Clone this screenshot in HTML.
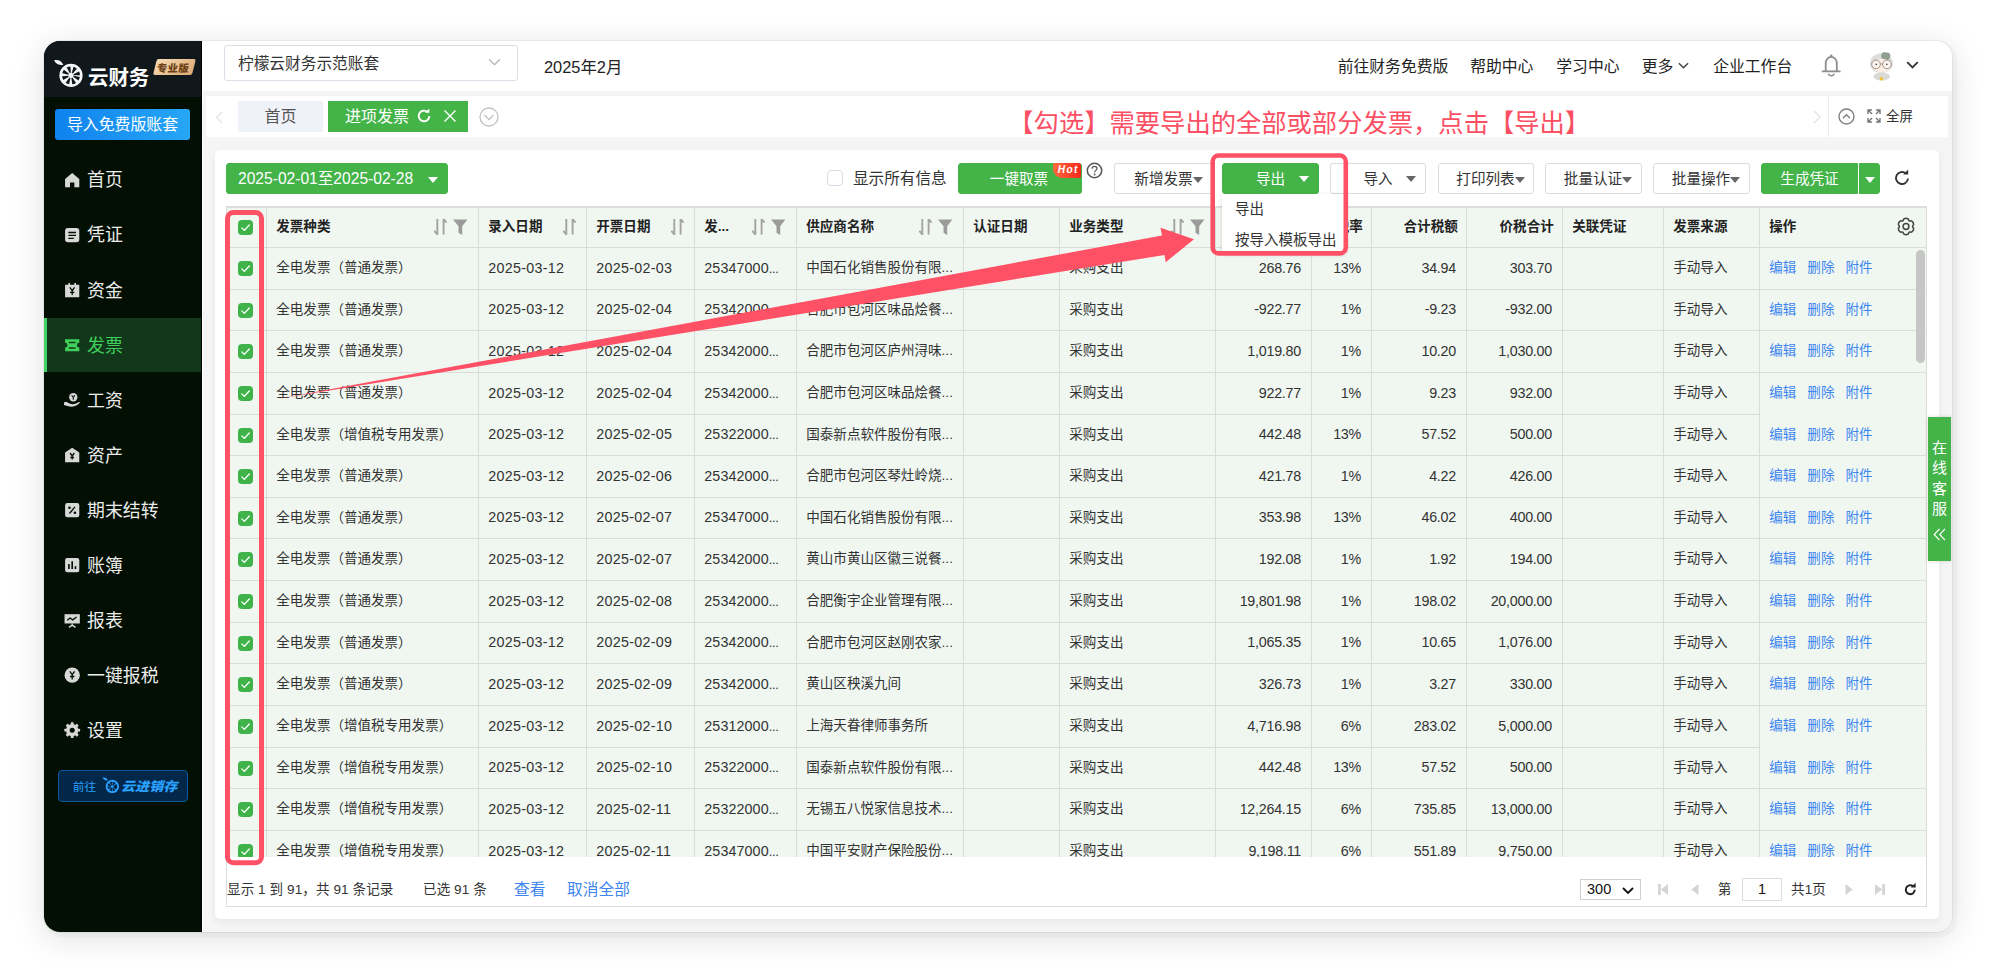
<!DOCTYPE html>
<html lang="zh-CN">
<head>
<meta charset="utf-8">
<title>进项发票 - 柠檬云财务</title>
<style>
*{box-sizing:border-box;margin:0;padding:0}
html,body{width:1996px;height:976px;overflow:hidden;background:#fff}
body{font-family:"Liberation Sans","Noto Sans CJK SC",sans-serif;color:#333;position:relative;font-size:13.54px;line-height:1.2}
a{text-decoration:none;color:inherit}
ul{list-style:none}
.abs{position:absolute}
/* app card */
.shadow{position:absolute;left:44px;top:41px;width:1908px;height:891px;border-radius:16px;box-shadow:0 6px 34px rgba(0,0,0,.13),0 0 0 1px rgba(0,0,0,.05),2.700px 2.700px 0 2.700px rgba(0,0,0,.022)}
.app{position:absolute;left:44px;top:41px;width:1908px;height:891px;border-radius:16px;background:#f5f5f5;overflow:hidden}
.page{position:absolute;left:-44px;top:-41px;width:1996px;height:976px}
/* sidebar */
.side{position:absolute;left:44px;top:41px;width:158px;border-right:1px solid #000;height:891px;background:#020f02}
.logo{position:absolute;left:0;top:0;width:157px;height:56px;background:#10181b}
.logo .brand{position:absolute;left:44px;top:21.500px;color:#fff;font-size:20.500px;font-weight:700;letter-spacing:-.1px;line-height:30px}
.logo .lemon{position:absolute;left:9px;top:18px}
.logo .pro{position:absolute;left:111px;top:17.700px;width:39px;height:15.500px;background:linear-gradient(135deg,#f7dcb6,#dba772);transform:skewX(-14deg);border-radius:2px}
.logo .pro span{display:block;position:relative;top:.800px;transform:skewX(8deg);color:#6b3f14;font-size:10.300px;font-weight:900;line-height:18.200px;text-align:center;letter-spacing:.500px;padding-right:2px}
.imp{position:absolute;left:11px;top:68px;width:135px;height:31px;border-radius:3px;background:linear-gradient(90deg,#0f82ee,#27a6f6);color:#fff;font-size:15.900px;line-height:31px;text-align:center}
.menu{position:absolute;left:0;top:111.400px;width:157px}
.menu li{position:relative;height:54.200px;margin-bottom:.900px;color:#ececec;font-size:17.900px;line-height:57px;padding-left:43px}
.menu li svg{position:absolute;left:20.300px;top:19.300px;width:16.400px;height:16.400px}
.menu li.on{background:#12381c;color:#3fcf5a}
.menu li.on:before{content:"";position:absolute;left:0;top:0;width:3px;height:100%;background:#3fd267}
.jxc{position:absolute;left:14.300px;top:729px;width:129.600px;height:31.700px;border:1px solid #0a5a9c;border-radius:4px;background:#022749;color:#2aa0ff;font-size:11.700px;line-height:32px;padding-left:13.500px;white-space:nowrap}
.jxc b{position:absolute;left:62px;top:0;font-style:italic;font-weight:900;font-size:12.800px;letter-spacing:0;display:inline-block;transform:scaleX(1.100);transform-origin:0 50%}
.jxc svg{position:absolute;left:42.500px;top:5.800px}
/* top header */
.top{position:absolute;left:202px;top:41px;width:1750px;height:50px;background:#fff}
.acct{position:absolute;left:22px;top:4px;width:294px;height:36px;border:1px solid #dcdfe8;border-radius:3px;font-size:15.700px;line-height:36.600px;padding-left:13px;color:#333}
.acct svg{position:absolute;right:16px;top:12px}
.period{position:absolute;left:342px;top:14px;font-size:16.400px;line-height:24px;color:#222}
.nav{position:absolute;top:14px;font-size:15.800px;line-height:24px;color:#222;white-space:nowrap}
/* tab bar */
.tabs{position:absolute;left:206px;top:96px;width:1742px;height:41px;background:#fff}
.tab{position:absolute;top:5px;height:31px;line-height:31px;font-size:16px;text-align:center}
.tab.home{left:32px;width:85px;background:#f0f2f9;color:#555}
.tab.cur{left:122px;width:140px;background:#44b449;color:#fff;text-align:left;padding-left:17px}
.tab.cur svg{position:absolute;top:7px}
.tabs .sep{position:absolute;left:1622px;top:0;width:1px;height:41px;background:#eee}
.full{position:absolute;left:1680px;top:12px;font-size:13.5px;line-height:18px;color:#333}
/* main panel */
.main{position:absolute;left:215px;top:150px;width:1724px;height:769px;background:#fff;border-radius:5px;box-shadow:0 3px 7px rgba(40,50,70,.07)}
.btn{position:absolute;top:163px;height:31px;border:1px solid #dcdcdc;border-radius:3px;background:#fff;font-size:14.600px;line-height:30.400px;color:#333;text-align:center;white-space:nowrap}
.btn.g{background:#44b449;border-color:#44b449;color:#fff}
.caret{display:inline-block;width:0;height:0;border-left:5px solid transparent;border-right:5px solid transparent;border-top:6px solid #666;vertical-align:middle}
.btn.g .caret{border-top-color:#fff}
.showall{position:absolute;left:827px;top:171.300px;font-size:15.600px;line-height:16px;color:#333;padding-left:26px;white-space:nowrap}
.showall i{position:absolute;left:0;top:-1.300px;width:16px;height:16px;border:1px solid #d9dce6;border-radius:4px;background:#fff}
.hot{position:absolute;left:1052.700px;top:163px;width:28.500px;height:14.700px;background:linear-gradient(90deg,#ff6a3d,#f5271c);border-radius:2px 3px 2px 9px;color:#fff;font-size:10.200px;font-weight:700;font-style:italic;line-height:14.400px;text-align:center;letter-spacing:1.300px;padding-left:2.500px}
.dd{position:absolute;left:1222px;top:194px;width:124px;height:60px;background:#fff;box-shadow:0 1px 4px rgba(0,0,0,.14);padding-top:1.300px}
.dd div{height:31px;line-height:29px;font-size:14.500px;padding-left:13px;color:#333;white-space:nowrap}
/* grid */
.grid{position:absolute;left:226px;top:206px;width:1701px;height:651px;overflow:hidden;border-top:2px solid #ddd;background:#f0f7f1}
.tbl{border-collapse:separate;border-spacing:0;table-layout:fixed;width:1701px}
.tbl th,.tbl td{border-right:1px solid #dadcda;border-bottom:1px solid #dadcda;padding:0 0 0 9.300px;font-size:13.540px;white-space:nowrap;overflow:hidden;text-align:left;color:#333;position:relative;vertical-align:middle}
.tbl th{height:40px;font-weight:700;color:#222;background:#f0f7f1}
.tbl td{height:42px;background:#f0f7f1}
.tbl tr.s td{height:41px}
.tbl th:first-child,.tbl td:first-child{border-left:1px solid #dadcda}
.tbl .c{padding:0 2px 0 0;text-align:center}
.tbl .r{text-align:right;padding:0 10px 0 0}
.tbl th.r{padding-right:8.300px}
.tbl .n{letter-spacing:-.250px;font-size:14.300px}
.tbl .d{letter-spacing:.280px;font-size:14.300px}
.tbl .v{letter-spacing:.100px;font-size:14.300px}
.tbl .v i{font-style:normal;letter-spacing:-.300px;font-size:13px}
.ck{display:inline-block;width:15px;height:15px;border-radius:4px;background:#3fb34a;vertical-align:middle}
.ck svg{display:block}
.hi{position:absolute;right:10.500px;top:11px;white-space:nowrap;line-height:0}
.hi svg{margin-left:5.500px;vertical-align:top}
.gear{position:absolute;right:11px;top:9px}
.op a{color:#3d86f0;margin-right:11px}
.tbl td.op.nb{border-bottom-color:transparent}
.vbar{position:absolute;left:1690px;top:42px;width:9px;height:113px;border-radius:5px;background:#c6c6c6}
/* footer */
.foot{position:absolute;left:226px;top:857px;width:1701px;height:50px;border:1px solid #ddd;border-top:none;background:#fff;font-size:13.54px;color:#333}
.foot span,.foot a{position:absolute;top:23.500px;letter-spacing:.100px;line-height:18px;white-space:nowrap}
.foot a{color:#3d86f0;font-size:15.700px}
/* service */
.svc{position:absolute;left:1928px;top:417px;width:23px;height:144px;background:#44b449;color:#fff;font-size:15px;line-height:20.3px;text-align:center;padding-top:21px;box-shadow:0 0 4px rgba(0,0,0,.15)}
/* annotations */
.anno{position:absolute;left:0;top:0;width:1996px;height:976px;pointer-events:none}
.tip{position:absolute;left:1008.300px;top:106px;font-size:25.300px;line-height:34px;color:#fc4f63;white-space:nowrap;letter-spacing:0}
.psel{position:absolute;left:1353px;top:22px;width:61px;height:21px;border:1px solid #cfcfcf;border-radius:0;font-size:14.5px;line-height:19px;padding-left:6px;color:#111;background:#fff}
.psel svg{position:absolute;right:6px;top:7px}
.pinp{position:absolute;left:1515px;top:21px;width:40px;height:23px;border:1px solid #ddd;border-radius:0;font-size:14.500px;line-height:21px;text-align:center;color:#111;background:#fff}

.btn .cr{position:absolute;right:9px;top:12px;width:0;height:0;border-left:5px solid transparent;border-right:5px solid transparent;border-top:6px solid #666}
.btn.g .cr{border-top-color:#fff}
.btn.pl{padding-left:9px}
.edge{position:absolute;left:202px;top:91px;width:1.300px;height:841px;background:#fff}

</style>
</head>
<body>
<div class="shadow"></div>
<div class="app"><div class="page">

<!-- sidebar -->
<aside class="side">
  <div class="logo">
    <svg class="lemon" viewBox="0 0 32 30" width="32" height="30"><path d="M1 1.200c4.500-.900 8 1 9.300 4.800C6.500 6.600 3 5 1 1.200z" fill="#f4f6f8"/><circle cx="18" cy="16.400" r="11.600" fill="#f4f6f8"/><circle cx="18" cy="16.400" r="5.800" fill="none" stroke="#10181b" stroke-width="6.400" stroke-dasharray="2.455 2.100" transform="rotate(10 18 16.400)"/></svg>
    <span class="brand">云财务</span>
    <span class="pro"><span>专业版</span></span>
  </div>
  <a class="imp">导入免费版账套</a>
  <ul class="menu">
    <li><svg viewBox="0 0 15 15" width="15" height="15"><path d="M7.500 1L1 6.500V14h4.500V9.500h4V14H14V6.500z" fill="#d8d8d8"/></svg>首页</li>
    <li><svg viewBox="0 0 15 15" width="15" height="15"><rect x="1" y="1" width="13" height="13" rx="2.500" fill="#d8d8d8"/><path d="M4 5h7M4 7.700h7M4 10.400h5" stroke="#020f02" stroke-width="1.300"/></svg>凭证</li>
    <li><svg viewBox="0 0 15 15" width="15" height="15"><path d="M1 2.500h3V1h1.500v1.500h4V1H11v1.500h3V14H1z" fill="#d8d8d8"/><path d="M5.300 5l2.200 3 2.200-3M7.500 8v4M5.500 9.500h4" stroke="#020f02" stroke-width="1.200" fill="none"/></svg>资金</li>
    <li class="on"><svg viewBox="0 0 15 15" width="15" height="15"><path d="M1 2h13v3.300a2.200 2.200 0 0 0 0 4.400V13H1V9.700a2.200 2.200 0 0 0 0-4.400z" fill="#3fcf5a"/><path d="M4.500 5h6M4.500 10h6" stroke="#12381c" stroke-width="1.400"/></svg>发票</li>
    <li><svg viewBox="0 0 15 15" width="15" height="15"><circle cx="8.500" cy="4.800" r="3.800" fill="#d8d8d8"/><path d="M7 3l1.500 2L10 3M8.500 5v2" stroke="#020f02" stroke-width="1" fill="none"/><path d="M0 9.500c2-.8 3.500 0 5 1 2 1 4 1 6.500-.2 1.200-.6 2.500-1.300 3.500-1.300-1.500 2.500-4.500 4.500-8 4.500-2.500 0-5-1-7-1.500z" fill="#d8d8d8"/></svg>工资</li>
    <li><svg viewBox="0 0 15 15" width="15" height="15"><path d="M7.500 .8L14 5v9H1V5z" fill="#d8d8d8"/><path d="M5.500 5.500l2 2.700 2-2.700M7.500 8v3.500M5.800 9.600h3.400" stroke="#020f02" stroke-width="1.200" fill="none"/></svg>资产</li>
    <li><svg viewBox="0 0 15 15" width="15" height="15"><rect x="1" y="1" width="13" height="13" rx="2" fill="#d8d8d8"/><path d="M10 4.500l-5 6" stroke="#020f02" stroke-width="1.200"/><circle cx="5" cy="5.300" r="1.200" fill="#020f02"/><circle cx="10" cy="9.800" r="1.200" fill="#020f02"/></svg>期末结转</li>
    <li><svg viewBox="0 0 15 15" width="15" height="15"><rect x="1" y="1" width="13" height="13" rx="2" fill="#d8d8d8"/><path d="M4.500 11V6.500M7.500 11V4M10.500 11V8.500" stroke="#020f02" stroke-width="1.500"/></svg>账簿</li>
    <li><svg viewBox="0 0 15 15" width="15" height="15"><path d="M.5 2h14v8.500H.5z" fill="#d8d8d8"/><path d="M3 7.500l2.500-2 2.500 1.700L11.500 4.500" stroke="#020f02" stroke-width="1.200" fill="none"/><path d="M7.500 10.500v1.500M4.500 14l3-2 3 2" stroke="#d8d8d8" stroke-width="1.300" fill="none"/></svg>报表</li>
    <li><svg viewBox="0 0 15 15" width="15" height="15"><circle cx="7.500" cy="7.500" r="7" fill="#d8d8d8"/><path d="M5.300 4l2.200 3 2.200-3M7.500 7v4.500M5.500 8.700h4" stroke="#020f02" stroke-width="1.200" fill="none"/></svg>一键报税</li>
    <li><svg viewBox="0 0 15 15" width="15" height="15"><g fill="#d8d8d8"><circle cx="7.500" cy="7.500" r="5.600"/><rect x="6.200" y=".300" width="2.600" height="3" rx=".500" transform="rotate(0 7.500 7.500)"/><rect x="6.200" y=".300" width="2.600" height="3" rx=".500" transform="rotate(45 7.500 7.500)"/><rect x="6.200" y=".300" width="2.600" height="3" rx=".500" transform="rotate(90 7.500 7.500)"/><rect x="6.200" y=".300" width="2.600" height="3" rx=".500" transform="rotate(135 7.500 7.500)"/><rect x="6.200" y=".300" width="2.600" height="3" rx=".500" transform="rotate(180 7.500 7.500)"/><rect x="6.200" y=".300" width="2.600" height="3" rx=".500" transform="rotate(225 7.500 7.500)"/><rect x="6.200" y=".300" width="2.600" height="3" rx=".500" transform="rotate(270 7.500 7.500)"/><rect x="6.200" y=".300" width="2.600" height="3" rx=".500" transform="rotate(315 7.500 7.500)"/></g><circle cx="7.500" cy="7.500" r="2.300" fill="#020f02"/></svg>设置</li>
  </ul>
  <a class="jxc">前往<svg viewBox="0 0 32 30" width="18.400" height="17.250"><path d="M1 1.200c4.500-.900 8 1 9.300 4.800C6.500 6.600 3 5 1 1.200z" fill="#2aa0ff"/><circle cx="18" cy="16.400" r="11.600" fill="#2aa0ff"/><circle cx="18" cy="16.400" r="5.300" fill="none" stroke="#022749" stroke-width="6.200" stroke-dasharray="3.060 1.102" transform="rotate(5 18 16.400)"/></svg><b>云进销存</b></a>
</aside>

<i class="edge"></i>
<!-- top header -->
<header class="top">
  <div class="acct">柠檬云财务示范账套<svg viewBox="0 0 14 10" width="13" height="9"><path d="M1 1.500l6 6 6-6" fill="none" stroke="#aaa" stroke-width="1.200"/></svg></div>
  <span class="period">2025年2月</span>
  <a class="nav" style="left:1135.700px">前往财务免费版</a>
  <a class="nav" style="left:1268.200px">帮助中心</a>
  <a class="nav" style="left:1354.300px">学习中心</a>
  <a class="nav" style="left:1439.700px">更多<svg viewBox="0 0 12 8" width="11" height="8" style="margin-left:5px;vertical-align:2px"><path d="M1 1l5 5 5-5" fill="none" stroke="#444" stroke-width="1.600"/></svg></a>
  <a class="nav" style="left:1511.200px">企业工作台</a>
  <svg class="abs" style="left:1618.800px;top:13.300px" viewBox="0 0 20 24" width="20" height="24"><circle cx="10.200" cy="1.700" r="1.200" fill="#8c8c8c"/><path d="M4.700 17.400V9.200a5.550 6.300 0 0 1 11.100 0V17.400" fill="none" stroke="#8c8c8c" stroke-width="1.800"/><path d="M.800 17.400H19.600" stroke="#8c8c8c" stroke-width="1.700"/><path d="M7.400 19.600a2.900 2.600 0 0 0 5.700 0" fill="none" stroke="#8c8c8c" stroke-width="1.500"/></svg>
  <svg class="abs" style="left:1667.900px;top:10.700px" viewBox="0 0 24 29" width="24" height="29"><ellipse cx="11.700" cy="24.500" rx="8.300" ry="4" fill="#d9d9d7"/><ellipse cx="11.500" cy="11.300" rx="11.500" ry="10" fill="#dededc"/><rect x="11.300" y=".300" width="8.800" height="7" rx="2.500" fill="#8e9e91" transform="rotate(8 15 4)"/><ellipse cx="11.800" cy="13.600" rx="9.500" ry="6.700" fill="#fdeee6"/><circle cx="3.700" cy="15" r="1.300" fill="#f9cfd0"/><circle cx="19.800" cy="15" r="1.300" fill="#f9cfd0"/><circle cx="6" cy="12.400" r="4.300" fill="rgba(255,255,255,.55)" stroke="#97857b" stroke-width=".900"/><circle cx="17" cy="12.400" r="4.300" fill="rgba(255,255,255,.55)" stroke="#97857b" stroke-width=".900"/><path d="M10.300 12h2.400" stroke="#97857b" stroke-width=".900"/><circle cx="6.300" cy="12.300" r=".850" fill="#4a4a4a"/><circle cx="16.800" cy="12.300" r=".850" fill="#4a4a4a"/><circle cx="11.400" cy="26.700" r="1.700" fill="#f2c230"/></svg>
  <svg class="abs" style="left:1704px;top:19.800px" viewBox="0 0 13 9" width="13" height="9"><path d="M1.200 1.200l5.300 5.300 5.300-5.300" fill="none" stroke="#333" stroke-width="1.800"/></svg>
</header>

<!-- tab bar -->
<nav class="tabs">
  <svg class="abs" style="left:8.500px;top:14.500px" viewBox="0 0 8 13" width="8" height="13"><path d="M7 1L1.500 6.500 7 12" fill="none" stroke="#e4e4e4" stroke-width="1.400"/></svg>
  <a class="tab home">首页</a>
  <a class="tab cur">进项发票
    <svg style="left:88px" viewBox="0 0 16 16" width="16" height="16"><path d="M13.300 8A5.300 5.300 0 1 1 11.500 4" fill="none" stroke="#fff" stroke-width="1.900"/><path d="M9 4.800h4.300V.6z" fill="#fff"/></svg>
    <svg style="left:114px" viewBox="0 0 16 16" width="16" height="16"><path d="M2.500 2.500l11 11M13.500 2.500l-11 11" stroke="#fff" stroke-width="1.400"/></svg>
  </a>
  <svg class="abs" style="left:272.500px;top:10.500px" viewBox="0 0 20 20" width="20" height="20"><circle cx="10" cy="10" r="9" fill="none" stroke="#c2c2c2" stroke-width="1.300"/><path d="M5.500 8l4.500 4.500L14.500 8" fill="none" stroke="#c2c2c2" stroke-width="1.300"/></svg>
  <svg class="abs" style="left:1607.300px;top:13.500px" viewBox="0 0 8 14" width="8" height="14"><path d="M1 1l6 6-6 6" fill="none" stroke="#e2e2e2" stroke-width="1.300"/></svg>
  <i class="sep"></i>
  <svg class="abs" style="left:1632px;top:11.700px" viewBox="0 0 17 17" width="17" height="17"><circle cx="8.500" cy="8.500" r="7.500" fill="none" stroke="#808080" stroke-width="1.400"/><path d="M5 10.200l3.500-3.500 3.500 3.500" fill="none" stroke="#808080" stroke-width="1.400"/></svg>
  <svg class="abs" style="left:1661px;top:13.300px" viewBox="0 0 14 14" width="14" height="14"><path d="M1 5V1h4M9 1h4v4M13 9v4H9M5 13H1V9M1.500 1.500l3.500 3.500M12.500 1.500L9 5M12.500 12.500L9 9M1.500 12.500L5 9" fill="none" stroke="#777" stroke-width="1.400"/></svg>
  <span class="full">全屏</span>
</nav>

<!-- main -->
<section class="main"></section>
<a class="btn g" style="left:226px;width:222px;text-align:left;padding-left:11px;font-size:15.6px">2025-02-01至2025-02-28<i class="caret" style="margin-left:15px;border-top-color:#fff"></i></a>
<label class="showall"><i></i>显示所有信息</label>
<a class="btn g" style="left:958px;width:124px;padding-right:2px">一键取票</a>
<span class="hot">Hot</span>
<svg class="abs" style="left:1086px;top:161.600px" viewBox="0 0 17 17" width="17" height="17"><circle cx="8.500" cy="8.500" r="7.200" fill="none" stroke="#555" stroke-width="1.500"/><path d="M6 6.800c0-1.500 1.100-2.500 2.500-2.500s2.500 1 2.500 2.300c0 1.700-2.400 1.900-2.400 3.800" fill="none" stroke="#555" stroke-width="1.200"/><circle cx="8.600" cy="12.500" r=".9" fill="#555"/></svg>
<a class="btn pl" style="left:1114px;width:100px">新增发票<i class="caret"></i></a>
<a class="btn g" style="left:1222px;width:97px">导出<i class="cr"></i></a>
<a class="btn" style="left:1330px;width:96px">导入<i class="cr"></i></a>
<a class="btn pl" style="left:1438px;width:96px">打印列表<i class="caret"></i></a>
<a class="btn pl" style="left:1545px;width:97px">批量认证<i class="caret"></i></a>
<a class="btn pl" style="left:1653px;width:97px">批量操作<i class="caret"></i></a>
<a class="btn g" style="left:1761px;width:97px;border-radius:3px 0 0 3px">生成凭证</a>
<a class="btn g" style="left:1859px;width:21px;border-radius:0 3px 3px 0"><i class="caret"></i></a>
<svg class="abs" style="left:1893px;top:169px" viewBox="0 0 18 18" width="18" height="18"><path d="M15 9.500A6 6 0 1 1 12.800 4.300" fill="none" stroke="#333" stroke-width="1.900"/><path d="M10.200 5.600h5V.6z" fill="#333"/></svg>
<div class="grid">
<table class="tbl">
<colgroup>
<col style="width:41px">
<col style="width:212px">
<col style="width:108px">
<col style="width:108px">
<col style="width:102px">
<col style="width:167px">
<col style="width:96px">
<col style="width:156px">
<col style="width:96px">
<col style="width:60px">
<col style="width:95px">
<col style="width:96px">
<col style="width:101px">
<col style="width:96px">
<col style="width:167px">
</colgroup>
<thead>
<tr>
<th class="c"><span class="ck"><svg viewBox="0 0 15 15" width="15" height="15"><path d="M3.800 7.900l2.500 2.500L11.300 5" fill="none" stroke="#fff" stroke-width="1.300" stroke-linecap="round" stroke-linejoin="round"/></svg></span></th>
<th class=""><span class="hl">发票种类</span><span class="hi"><svg class="sort" viewBox="0 0 13 16" width="13" height="16"><path d="M3.300 0v15.400L.300 11.800M9.600 15.400V0l2.900 3.600" fill="none" stroke="#a3a3a3" stroke-width="1.900"/></svg><svg class="filt" viewBox="0 0 15 16" width="15" height="16"><path d="M0 .400h14.400L9.200 7.200v8.800L5.500 13.700V7.200z" fill="#9b9b9b"/></svg></span></th>
<th class=""><span class="hl">录入日期</span><span class="hi"><svg class="sort" viewBox="0 0 13 16" width="13" height="16"><path d="M3.300 0v15.400L.300 11.800M9.600 15.400V0l2.900 3.600" fill="none" stroke="#a3a3a3" stroke-width="1.900"/></svg></span></th>
<th class=""><span class="hl">开票日期</span><span class="hi"><svg class="sort" viewBox="0 0 13 16" width="13" height="16"><path d="M3.300 0v15.400L.300 11.800M9.600 15.400V0l2.900 3.600" fill="none" stroke="#a3a3a3" stroke-width="1.900"/></svg></span></th>
<th class=""><span class="hl">发...</span><span class="hi"><svg class="sort" viewBox="0 0 13 16" width="13" height="16"><path d="M3.300 0v15.400L.300 11.800M9.600 15.400V0l2.900 3.600" fill="none" stroke="#a3a3a3" stroke-width="1.900"/></svg><svg class="filt" viewBox="0 0 15 16" width="15" height="16"><path d="M0 .400h14.400L9.200 7.200v8.800L5.500 13.700V7.200z" fill="#9b9b9b"/></svg></span></th>
<th class=""><span class="hl">供应商名称</span><span class="hi"><svg class="sort" viewBox="0 0 13 16" width="13" height="16"><path d="M3.300 0v15.400L.300 11.800M9.600 15.400V0l2.900 3.600" fill="none" stroke="#a3a3a3" stroke-width="1.900"/></svg><svg class="filt" viewBox="0 0 15 16" width="15" height="16"><path d="M0 .400h14.400L9.200 7.200v8.800L5.500 13.700V7.200z" fill="#9b9b9b"/></svg></span></th>
<th class=""><span class="hl">认证日期</span></th>
<th class=""><span class="hl">业务类型</span><span class="hi"><svg class="sort" viewBox="0 0 13 16" width="13" height="16"><path d="M3.300 0v15.400L.300 11.800M9.600 15.400V0l2.900 3.600" fill="none" stroke="#a3a3a3" stroke-width="1.900"/></svg><svg class="filt" viewBox="0 0 15 16" width="15" height="16"><path d="M0 .400h14.400L9.200 7.200v8.800L5.500 13.700V7.200z" fill="#9b9b9b"/></svg></span></th>
<th class="r"><span class="hl">金额</span></th>
<th class="r"><span class="hl">税率</span></th>
<th class="r"><span class="hl">合计税额</span></th>
<th class="r"><span class="hl">价税合计</span></th>
<th class=""><span class="hl">关联凭证</span></th>
<th class=""><span class="hl">发票来源</span></th>
<th><span class="hl">操作</span><svg class="gear" viewBox="0 0 18 19" width="18" height="19"><path d="M10.80 1.71C9.96 1.34 8.04 1.34 7.20 1.71C6.36 2.07 6.43 3.48 5.75 3.87C5.07 4.26 3.88 3.50 3.15 4.04C2.42 4.59 1.46 6.25 1.35 7.16C1.24 8.07 2.50 8.72 2.50 9.50C2.50 10.28 1.24 10.93 1.35 11.84C1.46 12.75 2.42 14.41 3.15 14.96C3.88 15.50 5.07 14.74 5.75 15.13C6.43 15.52 6.36 16.93 7.20 17.29C8.04 17.66 9.96 17.66 10.80 17.29C11.64 16.93 11.57 15.52 12.25 15.13C12.93 14.74 14.12 15.50 14.85 14.96C15.58 14.41 16.54 12.75 16.65 11.84C16.76 10.93 15.50 10.28 15.50 9.50C15.50 8.72 16.76 8.07 16.65 7.16C16.54 6.25 15.58 4.59 14.85 4.04C14.12 3.50 12.93 4.26 12.25 3.87C11.57 3.48 11.64 2.07 10.80 1.71z" fill="none" stroke="#444" stroke-width="1.500" stroke-linejoin="round"/><circle cx="9" cy="9.500" r="2.900" fill="none" stroke="#444" stroke-width="1.500"/></svg></th>
</tr>
</thead>
<tbody>
<tr><td class="c"><span class="ck"><svg viewBox="0 0 15 15" width="15" height="15"><path d="M3.800 7.900l2.500 2.500L11.300 5" fill="none" stroke="#fff" stroke-width="1.300" stroke-linecap="round" stroke-linejoin="round"/></svg></span></td><td>全电发票（普通发票）</td><td class="d">2025-03-12</td><td class="d">2025-02-03</td><td class="v">25347000<i>...</i></td><td>中国石化销售股份有限...</td><td></td><td>采购支出</td><td class="r n">268.76</td><td class="r n">13%</td><td class="r n">34.94</td><td class="r n">303.70</td><td></td><td>手动导入</td><td class="op"><a>编辑</a><a>删除</a><a>附件</a></td></tr>
<tr class="s"><td class="c"><span class="ck"><svg viewBox="0 0 15 15" width="15" height="15"><path d="M3.800 7.900l2.500 2.500L11.300 5" fill="none" stroke="#fff" stroke-width="1.300" stroke-linecap="round" stroke-linejoin="round"/></svg></span></td><td>全电发票（普通发票）</td><td class="d">2025-03-12</td><td class="d">2025-02-04</td><td class="v">25342000<i>...</i></td><td>合肥市包河区味品烩餐...</td><td></td><td>采购支出</td><td class="r n">-922.77</td><td class="r n">1%</td><td class="r n">-9.23</td><td class="r n">-932.00</td><td></td><td>手动导入</td><td class="op"><a>编辑</a><a>删除</a><a>附件</a></td></tr>
<tr><td class="c"><span class="ck"><svg viewBox="0 0 15 15" width="15" height="15"><path d="M3.800 7.900l2.500 2.500L11.300 5" fill="none" stroke="#fff" stroke-width="1.300" stroke-linecap="round" stroke-linejoin="round"/></svg></span></td><td>全电发票（普通发票）</td><td class="d">2025-03-12</td><td class="d">2025-02-04</td><td class="v">25342000<i>...</i></td><td>合肥市包河区庐州浔味...</td><td></td><td>采购支出</td><td class="r n">1,019.80</td><td class="r n">1%</td><td class="r n">10.20</td><td class="r n">1,030.00</td><td></td><td>手动导入</td><td class="op"><a>编辑</a><a>删除</a><a>附件</a></td></tr>
<tr><td class="c"><span class="ck"><svg viewBox="0 0 15 15" width="15" height="15"><path d="M3.800 7.900l2.500 2.500L11.300 5" fill="none" stroke="#fff" stroke-width="1.300" stroke-linecap="round" stroke-linejoin="round"/></svg></span></td><td>全电发票（普通发票）</td><td class="d">2025-03-12</td><td class="d">2025-02-04</td><td class="v">25342000<i>...</i></td><td>合肥市包河区味品烩餐...</td><td></td><td>采购支出</td><td class="r n">922.77</td><td class="r n">1%</td><td class="r n">9.23</td><td class="r n">932.00</td><td></td><td>手动导入</td><td class="op nb"><a>编辑</a><a>删除</a><a>附件</a></td></tr>
<tr class="s"><td class="c"><span class="ck"><svg viewBox="0 0 15 15" width="15" height="15"><path d="M3.800 7.900l2.500 2.500L11.300 5" fill="none" stroke="#fff" stroke-width="1.300" stroke-linecap="round" stroke-linejoin="round"/></svg></span></td><td>全电发票（增值税专用发票）</td><td class="d">2025-03-12</td><td class="d">2025-02-05</td><td class="v">25322000<i>...</i></td><td>国泰新点软件股份有限...</td><td></td><td>采购支出</td><td class="r n">442.48</td><td class="r n">13%</td><td class="r n">57.52</td><td class="r n">500.00</td><td></td><td>手动导入</td><td class="op"><a>编辑</a><a>删除</a><a>附件</a></td></tr>
<tr><td class="c"><span class="ck"><svg viewBox="0 0 15 15" width="15" height="15"><path d="M3.800 7.900l2.500 2.500L11.300 5" fill="none" stroke="#fff" stroke-width="1.300" stroke-linecap="round" stroke-linejoin="round"/></svg></span></td><td>全电发票（普通发票）</td><td class="d">2025-03-12</td><td class="d">2025-02-06</td><td class="v">25342000<i>...</i></td><td>合肥市包河区琴灶岭烧...</td><td></td><td>采购支出</td><td class="r n">421.78</td><td class="r n">1%</td><td class="r n">4.22</td><td class="r n">426.00</td><td></td><td>手动导入</td><td class="op"><a>编辑</a><a>删除</a><a>附件</a></td></tr>
<tr class="s"><td class="c"><span class="ck"><svg viewBox="0 0 15 15" width="15" height="15"><path d="M3.800 7.900l2.500 2.500L11.300 5" fill="none" stroke="#fff" stroke-width="1.300" stroke-linecap="round" stroke-linejoin="round"/></svg></span></td><td>全电发票（普通发票）</td><td class="d">2025-03-12</td><td class="d">2025-02-07</td><td class="v">25347000<i>...</i></td><td>中国石化销售股份有限...</td><td></td><td>采购支出</td><td class="r n">353.98</td><td class="r n">13%</td><td class="r n">46.02</td><td class="r n">400.00</td><td></td><td>手动导入</td><td class="op"><a>编辑</a><a>删除</a><a>附件</a></td></tr>
<tr><td class="c"><span class="ck"><svg viewBox="0 0 15 15" width="15" height="15"><path d="M3.800 7.900l2.500 2.500L11.300 5" fill="none" stroke="#fff" stroke-width="1.300" stroke-linecap="round" stroke-linejoin="round"/></svg></span></td><td>全电发票（普通发票）</td><td class="d">2025-03-12</td><td class="d">2025-02-07</td><td class="v">25342000<i>...</i></td><td>黄山市黄山区徽三说餐...</td><td></td><td>采购支出</td><td class="r n">192.08</td><td class="r n">1%</td><td class="r n">1.92</td><td class="r n">194.00</td><td></td><td>手动导入</td><td class="op"><a>编辑</a><a>删除</a><a>附件</a></td></tr>
<tr><td class="c"><span class="ck"><svg viewBox="0 0 15 15" width="15" height="15"><path d="M3.800 7.900l2.500 2.500L11.300 5" fill="none" stroke="#fff" stroke-width="1.300" stroke-linecap="round" stroke-linejoin="round"/></svg></span></td><td>全电发票（普通发票）</td><td class="d">2025-03-12</td><td class="d">2025-02-08</td><td class="v">25342000<i>...</i></td><td>合肥衡宇企业管理有限...</td><td></td><td>采购支出</td><td class="r n">19,801.98</td><td class="r n">1%</td><td class="r n">198.02</td><td class="r n">20,000.00</td><td></td><td>手动导入</td><td class="op"><a>编辑</a><a>删除</a><a>附件</a></td></tr>
<tr class="s"><td class="c"><span class="ck"><svg viewBox="0 0 15 15" width="15" height="15"><path d="M3.800 7.900l2.500 2.500L11.300 5" fill="none" stroke="#fff" stroke-width="1.300" stroke-linecap="round" stroke-linejoin="round"/></svg></span></td><td>全电发票（普通发票）</td><td class="d">2025-03-12</td><td class="d">2025-02-09</td><td class="v">25342000<i>...</i></td><td>合肥市包河区赵刚农家...</td><td></td><td>采购支出</td><td class="r n">1,065.35</td><td class="r n">1%</td><td class="r n">10.65</td><td class="r n">1,076.00</td><td></td><td>手动导入</td><td class="op"><a>编辑</a><a>删除</a><a>附件</a></td></tr>
<tr><td class="c"><span class="ck"><svg viewBox="0 0 15 15" width="15" height="15"><path d="M3.800 7.900l2.500 2.500L11.300 5" fill="none" stroke="#fff" stroke-width="1.300" stroke-linecap="round" stroke-linejoin="round"/></svg></span></td><td>全电发票（普通发票）</td><td class="d">2025-03-12</td><td class="d">2025-02-09</td><td class="v">25342000<i>...</i></td><td>黄山区秧溪九间</td><td></td><td>采购支出</td><td class="r n">326.73</td><td class="r n">1%</td><td class="r n">3.27</td><td class="r n">330.00</td><td></td><td>手动导入</td><td class="op"><a>编辑</a><a>删除</a><a>附件</a></td></tr>
<tr><td class="c"><span class="ck"><svg viewBox="0 0 15 15" width="15" height="15"><path d="M3.800 7.900l2.500 2.500L11.300 5" fill="none" stroke="#fff" stroke-width="1.300" stroke-linecap="round" stroke-linejoin="round"/></svg></span></td><td>全电发票（增值税专用发票）</td><td class="d">2025-03-12</td><td class="d">2025-02-10</td><td class="v">25312000<i>...</i></td><td>上海天眷律师事务所</td><td></td><td>采购支出</td><td class="r n">4,716.98</td><td class="r n">6%</td><td class="r n">283.02</td><td class="r n">5,000.00</td><td></td><td>手动导入</td><td class="op nb"><a>编辑</a><a>删除</a><a>附件</a></td></tr>
<tr class="s"><td class="c"><span class="ck"><svg viewBox="0 0 15 15" width="15" height="15"><path d="M3.800 7.900l2.500 2.500L11.300 5" fill="none" stroke="#fff" stroke-width="1.300" stroke-linecap="round" stroke-linejoin="round"/></svg></span></td><td>全电发票（增值税专用发票）</td><td class="d">2025-03-12</td><td class="d">2025-02-10</td><td class="v">25322000<i>...</i></td><td>国泰新点软件股份有限...</td><td></td><td>采购支出</td><td class="r n">442.48</td><td class="r n">13%</td><td class="r n">57.52</td><td class="r n">500.00</td><td></td><td>手动导入</td><td class="op"><a>编辑</a><a>删除</a><a>附件</a></td></tr>
<tr><td class="c"><span class="ck"><svg viewBox="0 0 15 15" width="15" height="15"><path d="M3.800 7.900l2.500 2.500L11.300 5" fill="none" stroke="#fff" stroke-width="1.300" stroke-linecap="round" stroke-linejoin="round"/></svg></span></td><td>全电发票（增值税专用发票）</td><td class="d">2025-03-12</td><td class="d">2025-02-11</td><td class="v">25322000<i>...</i></td><td>无锡五八悦家信息技术...</td><td></td><td>采购支出</td><td class="r n">12,264.15</td><td class="r n">6%</td><td class="r n">735.85</td><td class="r n">13,000.00</td><td></td><td>手动导入</td><td class="op"><a>编辑</a><a>删除</a><a>附件</a></td></tr>
<tr><td class="c"><span class="ck"><svg viewBox="0 0 15 15" width="15" height="15"><path d="M3.800 7.900l2.500 2.500L11.300 5" fill="none" stroke="#fff" stroke-width="1.300" stroke-linecap="round" stroke-linejoin="round"/></svg></span></td><td>全电发票（增值税专用发票）</td><td class="d">2025-03-12</td><td class="d">2025-02-11</td><td class="v">25347000<i>...</i></td><td>中国平安财产保险股份...</td><td></td><td>采购支出</td><td class="r n">9,198.11</td><td class="r n">6%</td><td class="r n">551.89</td><td class="r n">9,750.00</td><td></td><td>手动导入</td><td class="op"><a>编辑</a><a>删除</a><a>附件</a></td></tr>
</tbody>
</table>
<div class="vbar"></div>
</div>
<div class="foot">
  <span style="left:0">显示 1 到 91，共 91 条记录</span>
  <span style="left:196px">已选 91 条</span>
  <a style="left:287px">查看</a>
  <a style="left:340px">取消全部</a>
  <div class="psel">300<svg viewBox="0 0 12 8" width="12" height="8"><path d="M1 1l5 5 5-5" fill="none" stroke="#111" stroke-width="1.800"/></svg></div>
  <svg class="abs" style="left:1431px;top:27px" viewBox="0 0 10 11" width="10" height="11"><path d="M0 0h2.800v11H0zM10 0v11L2.800 5.500z" fill="#d5d5d5"/></svg>
  <svg class="abs" style="left:1463.800px;top:27px" viewBox="0 0 8 11" width="8" height="11"><path d="M7.500 0v11L.3 5.500z" fill="#d5d5d5"/></svg>
  <span style="left:1490.700px">第</span>
  <div class="pinp">1</div>
  <span style="left:1564px">共1页</span>
  <svg class="abs" style="left:1617.800px;top:27px" viewBox="0 0 8 11" width="8" height="11"><path d="M.5 0v11L7.700 5.500z" fill="#d5d5d5"/></svg>
  <svg class="abs" style="left:1648px;top:27px" viewBox="0 0 10 11" width="10" height="11"><path d="M7.200 0H10v11H7.200zM0 0v11l7.200-5.500z" fill="#d5d5d5"/></svg>
  <svg class="abs" style="left:1676.500px;top:26px" viewBox="0 0 14 14" width="12.500" height="12.500"><path d="M12 7.500A5 5 0 1 1 10 3.500" fill="none" stroke="#222" stroke-width="2.200"/><path d="M7.600 5h5.400V-.2z" fill="#222"/></svg>
</div>

<!-- export dropdown -->
<div class="dd"><div>导出</div><div>按导入模板导出</div></div>

<!-- online service -->
<div class="svc">在<br>线<br>客<br>服<br><svg viewBox="0 0 13 13" width="13" height="13" style="margin-top:9px"><path d="M6.500 .8L1.200 6.500l5.300 5.700M12 .8L6.700 6.500 12 12.200" fill="none" stroke="#fff" stroke-width="1.200"/></svg></div>

</div></div>

<!-- tutorial annotations -->
<div class="tip">【勾选】需要导出的全部或部分发票，点击【导出】</div>
<svg class="anno" viewBox="0 0 1996 976" width="1996" height="976">
  <rect x="227.500" y="212.400" width="34" height="650.300" rx="6" fill="none" stroke="#ff5165" stroke-width="5"/>
  <rect x="1212.700" y="155.500" width="133.100" height="97.900" rx="6" fill="none" stroke="#ff5165" stroke-width="4.600"/>
  <polygon points="277,399 1162,235.600 1160.500,227.700 1194,239.200 1165.700,262.200 1164.500,254.900" fill="#ff5165"/>
</svg>

</body>
</html>
